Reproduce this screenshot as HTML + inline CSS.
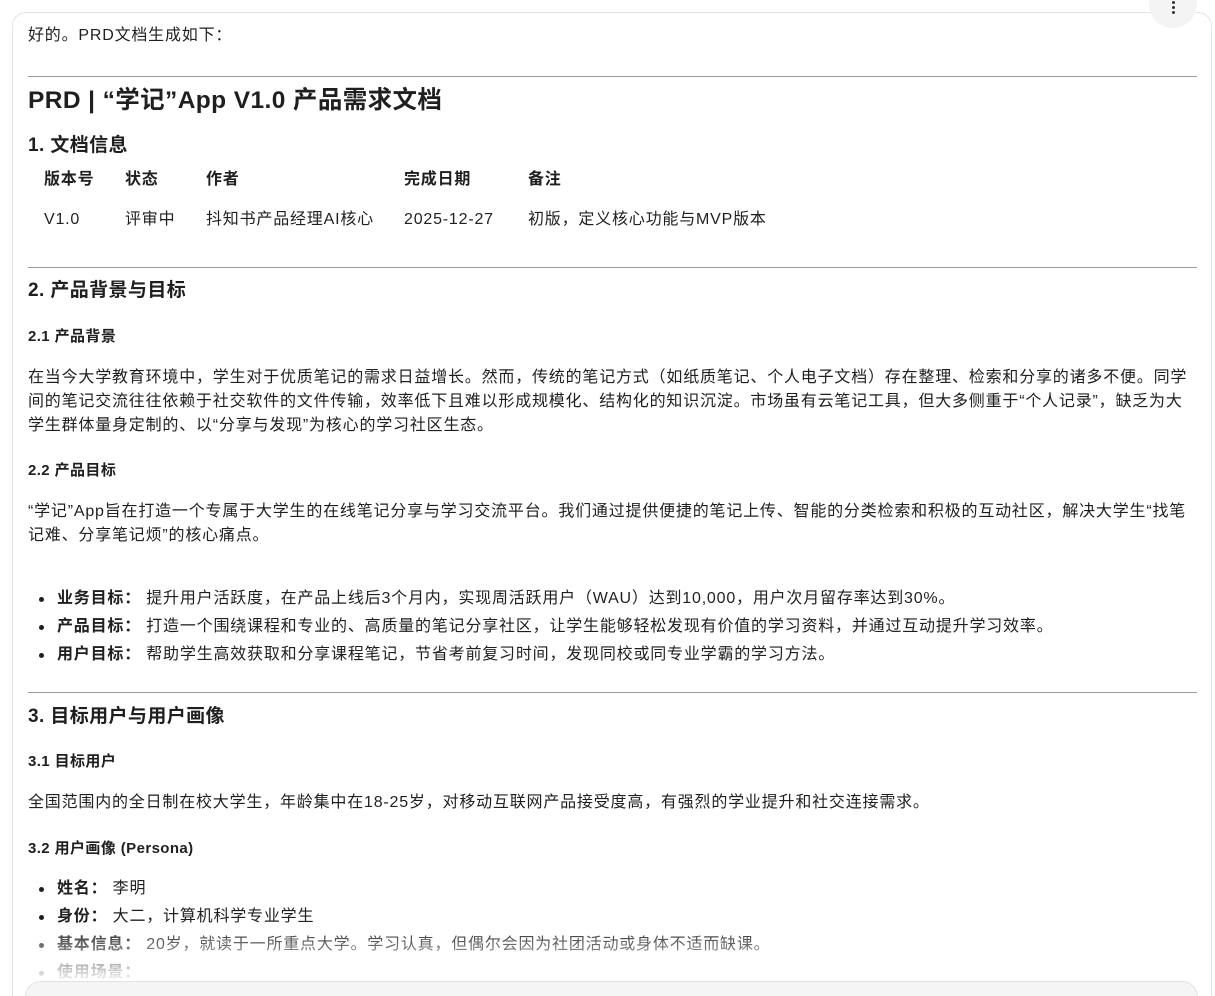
<!DOCTYPE html>
<html><head><meta charset="utf-8"><style>
*{margin:0;padding:0;box-sizing:border-box}
html{width:1215px;height:996px;overflow:hidden}
body{width:1215px;height:996px;overflow:hidden;background:#fff;font-family:"Liberation Sans","Noto Sans CJK SC",sans-serif;color:#1f1f1f;position:relative}
.card{position:absolute;left:12px;top:12px;width:1200px;height:1000px;border:1px solid #e3e3e3;border-radius:14px}
.t{position:absolute;left:28px;white-space:nowrap;font-size:16px;letter-spacing:0.8px;line-height:24px;transform:translateY(-50%);margin-top:2px}
.b{font-weight:bold}
.h1{font-size:24.5px;font-weight:bold;letter-spacing:0.4px;line-height:30px}
.h2{font-size:19px;font-weight:bold;letter-spacing:0.4px}
.h3{font-size:15px;font-weight:bold;letter-spacing:0.4px}
hr{position:absolute;left:28px;width:1169px;border:0;border-top:1px solid #9a9a9a;height:0}
.li::before{content:"";position:absolute;left:-18px;top:10px;width:5px;height:5px;border-radius:50%;background:currentColor}
.li{left:57px}
.fade{position:absolute;left:13px;top:925px;width:1195px;height:56px;background:linear-gradient(rgba(255,255,255,0),rgba(255,255,255,0.95))}
.input{position:absolute;left:25px;top:981px;width:1173px;height:60px;background:#f5f5f5;border:1px solid #e2e2e2;border-radius:16px}
.menu{position:absolute;left:1149px;top:-20px;width:48px;height:48px;border-radius:50%;background:#f4f4f4}
.dot{position:absolute;left:1172px;width:3px;height:3px;border-radius:50%;background:#333}
</style></head><body>
<div class="card"></div>
<div class="menu"></div>
<div class="dot" style="top:1px"></div><div class="dot" style="top:6px"></div><div class="dot" style="top:11px"></div>
<div class="t" style="top:34px">好的。PRD文档生成如下：</div>
<hr style="top:76px">
<div class="t h1" style="top:99px">PRD | “学记”App V1.0 产品需求文档</div>
<div class="t h2" style="top:144px">1. 文档信息</div>
<div class="t b" style="top:178px;left:44px">版本号</div>
<div class="t b" style="top:178px;left:125px">状态</div>
<div class="t b" style="top:178px;left:206px">作者</div>
<div class="t b" style="top:178px;left:404px">完成日期</div>
<div class="t b" style="top:178px;left:528px">备注</div>
<div class="t" style="top:218px;left:44px">V1.0</div>
<div class="t" style="top:218px;left:125px">评审中</div>
<div class="t" style="top:218px;left:206px">抖知书产品经理AI核心</div>
<div class="t" style="top:218px;left:404px">2025-12-27</div>
<div class="t" style="top:218px;left:528px">初版，定义核心功能与MVP版本</div>
<hr style="top:267px">
<div class="t h2" style="top:289px">2. 产品背景与目标</div>
<div class="t h3" style="top:335px">2.1 产品背景</div>
<div class="t" style="top:376px">在当今大学教育环境中，学生对于优质笔记的需求日益增长。然而，传统的笔记方式（如纸质笔记、个人电子文档）存在整理、检索和分享的诸多不便。同学</div>
<div class="t" style="top:400px">间的笔记交流往往依赖于社交软件的文件传输，效率低下且难以形成规模化、结构化的知识沉淀。市场虽有云笔记工具，但大多侧重于“个人记录”，缺乏为大</div>
<div class="t" style="top:424px">学生群体量身定制的、以“分享与发现”为核心的学习社区生态。</div>
<div class="t h3" style="top:469px">2.2 产品目标</div>
<div class="t" style="top:510px">“学记”App旨在打造一个专属于大学生的在线笔记分享与学习交流平台。我们通过提供便捷的笔记上传、智能的分类检索和积极的互动社区，解决大学生“找笔</div>
<div class="t" style="top:534px">记难、分享笔记烦”的核心痛点。</div>
<div class="t li" style="top:597px"><b>业务目标：</b> 提升用户活跃度，在产品上线后3个月内，实现周活跃用户（WAU）达到10,000，用户次月留存率达到30%。</div>
<div class="t li" style="top:625px"><b>产品目标：</b> 打造一个围绕课程和专业的、高质量的笔记分享社区，让学生能够轻松发现有价值的学习资料，并通过互动提升学习效率。</div>
<div class="t li" style="top:653px"><b>用户目标：</b> 帮助学生高效获取和分享课程笔记，节省考前复习时间，发现同校或同专业学霸的学习方法。</div>
<hr style="top:692px">
<div class="t h2" style="top:715px">3. 目标用户与用户画像</div>
<div class="t h3" style="top:760px">3.1 目标用户</div>
<div class="t" style="top:801px">全国范围内的全日制在校大学生，年龄集中在18-25岁，对移动互联网产品接受度高，有强烈的学业提升和社交连接需求。</div>
<div class="t h3" style="top:847px">3.2 用户画像 (Persona)</div>
<div class="t li" style="top:887px"><b>姓名：</b> 李明</div>
<div class="t li" style="top:915px"><b>身份：</b> 大二，计算机科学专业学生</div>
<div class="t li" style="top:943px"><b>基本信息：</b> 20岁，就读于一所重点大学。学习认真，但偶尔会因为社团活动或身体不适而缺课。</div>
<div class="t li" style="top:971px"><b>使用场景：</b></div>
<div class="fade"></div>
<div class="input"></div>
</body></html>
